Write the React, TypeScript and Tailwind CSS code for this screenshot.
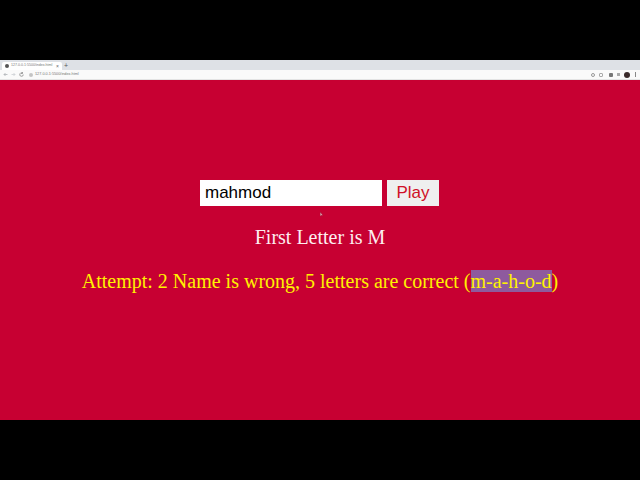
export default function App() {
  return (
    <div className="relative w-[640px] h-[480px] bg-black flex flex-col overflow-hidden">
      <div className="h-[60px] shrink-0" />
      <div className="h-[360px] flex flex-col bg-[#c70032]">
        {/* tab strip */}
        <div className="h-[10px] bg-[#dee1e6] flex items-end pl-[2px] shrink-0">
          <div className="w-[60px] h-[8px] bg-white rounded-t-[2px] flex items-center pl-[3px] pr-[3px] gap-[2px]">
            <span className="w-[4px] h-[4px] rounded-full bg-[#555]" />
            <span className="text-[3.6px] leading-none text-[#777] font-['Liberation_Sans',sans-serif] whitespace-nowrap flex-1">127.0.0.1:5500/index.html</span>
            <span className="text-[5px] leading-none text-[#666] font-['Liberation_Sans',sans-serif]">×</span>
          </div>
          <span className="text-[7px] leading-[8px] text-[#555] ml-[2px] font-['Liberation_Sans',sans-serif]">+</span>
        </div>
        {/* address bar */}
        <div className="h-[10px] bg-[#fafafa] border-b border-[#e4e4e4] flex items-center pl-[3px] pr-[4px] shrink-0">
          <div className="flex items-center gap-[3px]">
            <svg width="5" height="5" viewBox="0 0 10 10" fill="none" stroke="#a8acb0" strokeWidth="1.5"><path d="M9 5H2M5 2 2 5l3 3" /></svg>
            <svg width="5" height="5" viewBox="0 0 10 10" fill="none" stroke="#c8ccd0" strokeWidth="1.5"><path d="M1 5h7M5 2l3 3-3 3" /></svg>
            <svg width="5" height="5" viewBox="0 0 10 10" fill="none" stroke="#888" strokeWidth="1.5"><path d="M8.5 5A3.5 3.5 0 1 1 7 2.2M7 0v3h-3" /></svg>
          </div>
          <div className="ml-[5px] flex-1 h-[8px] flex items-center gap-[2px]">
            <span className="w-[4px] h-[4px] rounded-full bg-[#c4c4c4]" />
            <span className="text-[3.8px] leading-none text-[#777] font-['Liberation_Sans',sans-serif]">127.0.0.1:5500/index.html</span>
          </div>
          <div className="flex items-center gap-[4px]">
            <span className="w-[4px] h-[4px] rounded-full border-[0.5px] border-[#999]" />
            <span className="w-[4px] h-[4px] rounded-[1px] border-[0.5px] border-[#aaa]" />
            <span className="w-[4px] h-[4px] rounded-[1px] bg-[#777] ml-[2px]" />
            <span className="w-[3px] h-[3px] bg-[#aaa]" />
            <span className="w-[6px] h-[6px] rounded-full bg-[#3a2a2a]" />
            <span className="w-[1px] h-[5px] bg-[#888] ml-[1px]" />
          </div>
        </div>
        {/* page */}
        <div className="flex-1 flex flex-col items-center pt-[100px] font-['Liberation_Serif',serif]">
          <div className="flex items-center gap-[5px] h-[26px] mr-[1px]">
            <div className="w-[182px] h-[26px] bg-white flex items-center px-[5px] text-[17px] text-black font-['Liberation_Sans',sans-serif]">mahmod</div>
            <button className="w-[52px] h-[26px] bg-[#efefef] flex items-center justify-center text-[17px] text-[#d01027] font-['Liberation_Sans',sans-serif]">Play</button>
          </div>
          <p className="mt-[19px] h-[24px] leading-[24px] text-[20px] text-[#fdeef0]">First Letter is M</p>
          <p className="mt-[20px] h-[24px] leading-[24px] text-[20px] text-[#fff200] whitespace-nowrap">
            Attempt: 2 Name is wrong, 5 letters are correct (<span className="bg-[#8e5a9e] text-[#fff200]">m-a-h-o-d</span>)
          </p>
        </div>
      </div>
      <div className="h-[60px] shrink-0" />
      {/* mouse pointer */}
      <svg className="absolute left-[320px] top-[212px]" width="3" height="5" viewBox="0 0 6 10" fill="#e9b8c4" stroke="#7a1a30" strokeWidth="0.6"><path d="M0.5 0.5v8l2-2 3 0z" /></svg>
    </div>
  );
}
